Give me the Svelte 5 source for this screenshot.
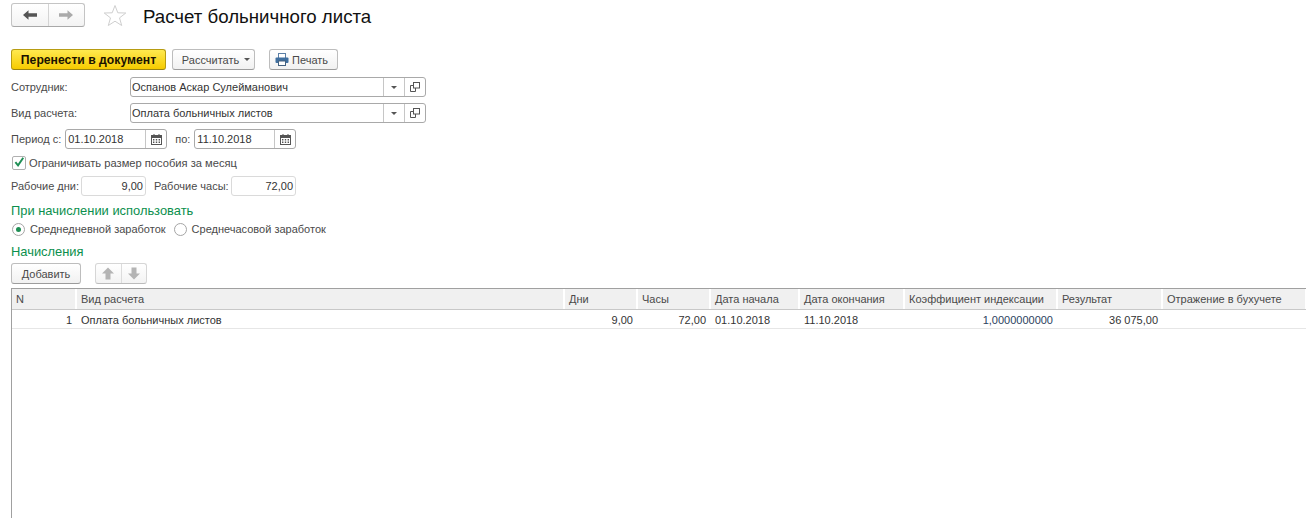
<script>
  const columns = [
    { title: "N", width: 65 },
    { title: "Вид расчета", width: 488 },
    { title: "Дни", width: 73 },
    { title: "Часы", width: 73 },
    { title: "Дата начала", width: 89 },
    { title: "Дата окончания", width: 105 },
    { title: "Коэффициент индексации", width: 153 },
    { title: "Результат", width: 105 },
    { title: "Отражение в бухучете", width: 144 }
  ];
  const row = [
    { text: "1", right: true },
    { text: "Оплата больничных листов" },
    { text: "9,00", right: true },
    { text: "72,00", right: true },
    { text: "01.10.2018" },
    { text: "11.10.2018" },
    { text: "1,0000000000", right: true, link: true },
    { text: "36 075,00", right: true },
    { text: "" }
  ];
  const gridColumns = columns.map((c) => c.width + "px").join(" ");
</script>

{#snippet calendar()}
  <svg width="11" height="11" viewBox="0 0 11 11">
    <rect x="0.5" y="1.5" width="10" height="9" fill="#fff" stroke="#555" />
    <rect x="0.5" y="1.5" width="10" height="2.5" fill="#555" />
    <path d="M2.5 0h1v2h-1zM7.5 0h1v2h-1z" fill="#555" />
    <path d="M2 5h1.4v1.4H2zM4.8 5h1.4v1.4H4.8zM7.6 5h1.4v1.4H7.6zM2 7.6h1.4V9H2zM4.8 7.6h1.4V9H4.8zM7.6 7.6h1.4V9H7.6z" fill="#555" />
  </svg>
{/snippet}

{#snippet refField(value)}
  <div class="field wide">
    <span class="value">{value}</span>
    <span class="cell-btn"><i class="caret"></i></span>
    <span class="cell-btn">
      <svg width="10" height="10" viewBox="0 0 10 10" fill="none" stroke="#555">
        <rect x="3.5" y="0.5" width="6" height="5.5" fill="#fff" />
        <path d="M3.5 3.5H0.5V9.5H5.5V6" />
      </svg>
    </span>
  </div>
{/snippet}

<div class="page">
  <div class="top">
    <div class="nav">
      <span class="nav-btn">
        <svg width="14" height="10" viewBox="0 0 14 10"><path d="M0 5L5.5 0.3V3.3H14V6.7H5.5V9.7Z" fill="#555" /></svg>
      </span>
      <span class="nav-btn">
        <svg width="14" height="10" viewBox="0 0 14 10"><path d="M14 5L8.5 0.3V3.3H0V6.7H8.5V9.7Z" fill="#aaa" /></svg>
      </span>
    </div>
    <svg class="star" width="24" height="23" viewBox="0 0 24 23">
      <path d="M12 1.5L14.8 8.8L22.8 9L16.5 13.9L18.7 21.5L12 17.2L5.3 21.5L7.5 13.9L1.2 9L9.2 8.8Z" fill="#fff" stroke="#cfcfcf" />
    </svg>
    <h1>Расчет больничного листа</h1>
  </div>

  <div class="actions">
    <button class="btn primary">Перенести в документ</button>
    <button class="btn calc">Рассчитать <i class="caret"></i></button>
    <button class="btn print">
      <svg width="14" height="13" viewBox="0 0 14 13">
        <rect x="3.5" y="0.5" width="7" height="5" fill="#fff" stroke="#5b7fa6" />
        <rect x="0.5" y="4.5" width="13" height="5.5" rx="1" fill="#3f6f9f" />
        <rect x="3.5" y="8" width="7" height="4.5" fill="#fff" stroke="#44617f" />
      </svg>
      Печать
    </button>
  </div>

  <div class="line ref">
    <span class="label ref-label">Сотрудник:</span>
    {@render refField("Оспанов Аскар Сулейманович")}
  </div>
  <div class="line ref">
    <span class="label ref-label">Вид расчета:</span>
    {@render refField("Оплата больничных листов")}
  </div>

  <div class="line period">
    <span class="label">Период с:</span>
    <div class="field date">
      <span class="value">01.10.2018</span>
      <span class="cell-btn">{@render calendar()}</span>
    </div>
    <span class="label till">по:</span>
    <div class="field date">
      <span class="value">11.10.2018</span>
      <span class="cell-btn">{@render calendar()}</span>
    </div>
  </div>

  <div class="check-line">
    <span class="check">
      <svg width="15" height="15" viewBox="0 0 15 15">
        <path d="M3 7L6.3 11L12.8 1.5" fill="none" stroke="#1f8f55" stroke-width="2.4" />
      </svg>
    </span>
    <span class="check-text">Ограничивать размер пособия за месяц</span>
  </div>

  <div class="line work">
    <span class="label days-label">Рабочие дни:</span>
    <div class="field num">9,00</div>
    <span class="label hours-label">Рабочие часы:</span>
    <div class="field num">72,00</div>
  </div>

  <div class="group-title use">При начислении использовать</div>
  <div class="radios">
    <span class="radio on"></span><span class="radio-text">Среднедневной заработок</span>
    <span class="radio"></span><span>Среднечасовой заработок</span>
  </div>

  <div class="group-title accruals">Начисления</div>
  <div class="table-bar">
    <button class="btn add">Добавить</button>
    <div class="arrows">
      <span class="arrow">
        <svg width="12" height="13" viewBox="0 0 12 13"><path d="M6 0.5L12 6.5H8.5V12.5H3.5V6.5H0Z" fill="#b4b4b4" /></svg>
      </span>
      <span class="arrow">
        <svg width="12" height="13" viewBox="0 0 12 13"><path d="M6 12.5L12 6.5H8.5V0.5H3.5V6.5H0Z" fill="#b4b4b4" /></svg>
      </span>
    </div>
  </div>

  <div class="table">
    <div class="thead" style="grid-template-columns:{gridColumns}">
      {#each columns as col}
        <div class="th">{col.title}</div>
      {/each}
    </div>
    <div class="tr" style="grid-template-columns:{gridColumns}">
      {#each row as cell}
        <div class="td" class:right={cell.right} class:link={cell.link}>{cell.text}</div>
      {/each}
    </div>
  </div>
</div>

<style>
  :global(body) {
    margin: 0;
    background: #fff;
    overflow: hidden;
  }
  .page {
    height: 518px;
    box-sizing: border-box;
    padding: 3px 0 0 11px;
    font: 11px "Liberation Sans", Arial, sans-serif;
    color: #4a4a4a;
    display: flex;
    flex-direction: column;
    overflow: hidden;
  }
  .top {
    display: flex;
    align-items: center;
    height: 24px;
  }
  .nav {
    display: flex;
    width: 74px;
    height: 24px;
    box-sizing: border-box;
    border: 1px solid #c4c4c4;
    border-bottom-color: #a8a8a8;
    border-radius: 3px;
    background: linear-gradient(#fff, #f3f3f3);
  }
  .nav-btn {
    flex: 1;
    display: flex;
    align-items: center;
    justify-content: center;
  }
  .nav-btn + .nav-btn {
    border-left: 1px solid #d4d4d4;
  }
  .star {
    margin-left: 18px;
  }
  h1 {
    margin: 3px 0 0 16px;
    font-size: 18.67px;
    font-weight: 400;
    color: #111;
  }
  .actions {
    display: flex;
    margin-top: 22px;
    height: 21px;
  }
  .btn {
    box-sizing: border-box;
    height: 21px;
    padding: 0;
    border: 1px solid #bdbdbd;
    border-bottom-color: #9c9c9c;
    border-radius: 3px;
    background: linear-gradient(#fff, #f1f1f1);
    font: inherit;
    color: #4a4a4a;
    display: flex;
    align-items: center;
    justify-content: center;
  }
  .primary {
    width: 155px;
    background: linear-gradient(#ffe94f, #f6cb00);
    border-color: #b79c12;
    border-bottom-color: #9a8410;
    color: #1a1200;
    font-size: 12.2px;
    font-weight: 700;
  }
  .calc {
    width: 83px;
    margin-left: 6px;
    padding-left: 5px;
    gap: 5px;
  }
  .print {
    width: 69px;
    margin-left: 14px;
    justify-content: flex-start;
    padding-left: 5px;
    gap: 3px;
  }
  .caret {
    display: inline-block;
    width: 0;
    height: 0;
    border: 3px solid transparent;
    border-top-color: #555;
    border-bottom-width: 0;
  }
  .line {
    display: flex;
    align-items: center;
    height: 20px;
  }
  .ref {
    margin-top: 6px;
  }
  .actions + .ref {
    margin-top: 7px;
  }
  .ref-label {
    width: 119px;
  }
  .field {
    box-sizing: border-box;
    height: 20px;
    border: 1px solid #a9a9a9;
    border-radius: 3px;
    background: #fff;
    display: flex;
    align-items: center;
    color: #333;
  }
  .wide {
    width: 296px;
  }
  .value {
    flex: 1;
    padding-left: 1px;
  }
  .cell-btn {
    flex: none;
    box-sizing: border-box;
    width: 21px;
    height: 18px;
    border-left: 1px solid #c6c6c6;
    display: flex;
    align-items: center;
    justify-content: center;
  }
  .period {
    margin-top: 6px;
  }
  .date {
    width: 102px;
    margin-left: 4px;
  }
  .date .value {
    padding-left: 2px;
  }
  .till {
    margin-left: 8px;
  }
  .date + .till + .date {
    margin-left: 4px;
  }
  .check-line {
    display: flex;
    align-items: center;
    height: 15px;
    margin-top: 6px;
    margin-left: 1px;
    gap: 3px;
  }
  .check-text {
    font-size: 11.15px;
  }
  .check {
    box-sizing: border-box;
    width: 14px;
    height: 14px;
    border: 1px solid #b0b0b0;
    border-radius: 2px;
    background: #fff;
    display: flex;
    align-items: center;
    justify-content: center;
  }
  .work {
    margin-top: 6px;
  }
  .days-label {
    width: 70px;
  }
  .hours-label {
    width: 77px;
    margin-left: 8px;
  }
  .num {
    width: 65px;
    justify-content: flex-end;
    padding-right: 2px;
    border-color: #dadada;
  }
  .group-title {
    font-size: 12.9px;
    line-height: 15px;
    color: #0b8f4d;
  }
  .use {
    margin-top: 7px;
  }
  .radios {
    display: flex;
    align-items: center;
    height: 14px;
    margin-top: 4px;
    margin-left: 1px;
  }
  .radio {
    box-sizing: border-box;
    width: 13px;
    height: 13px;
    margin-right: 5px;
    border: 1px solid #a5a5a5;
    border-radius: 50%;
    background: #fff;
    display: flex;
    align-items: center;
    justify-content: center;
  }
  .on::after {
    content: "";
    width: 5px;
    height: 5px;
    border-radius: 50%;
    background: #1f8f55;
  }
  .radio-text {
    margin-right: 8px;
  }
  .accruals {
    margin-top: 8px;
  }
  .table-bar {
    display: flex;
    margin-top: 4px;
    height: 21px;
  }
  .add {
    width: 70px;
  }
  .arrows {
    display: flex;
    width: 52px;
    height: 21px;
    box-sizing: border-box;
    margin-left: 14px;
    border: 1px solid #d6d6d6;
    border-bottom-color: #bcbcbc;
    border-radius: 3px;
    background: linear-gradient(#fff, #f3f3f3);
  }
  .arrow {
    flex: 1;
    display: flex;
    align-items: center;
    justify-content: center;
  }
  .arrow + .arrow {
    border-left: 1px solid #dcdcdc;
  }
  .table {
    flex: 1;
    margin-top: 4px;
    border-top: 1px solid #a0a0a0;
    border-left: 1px solid #a0a0a0;
    color: #333;
  }
  .thead,
  .tr {
    display: grid;
  }
  .thead {
    height: 21px;
    box-sizing: border-box;
    background: #f0f0f0;
    border-bottom: 1px solid #c8c8c8;
  }
  .th {
    border-right: 2px solid #fff;
    padding-left: 4px;
    line-height: 20px;
    white-space: nowrap;
    color: #4a4a4a;
  }
  .tr {
    height: 19px;
    box-sizing: border-box;
    border-bottom: 1px solid #e6e6e6;
  }
  .td {
    padding: 1px 4px 0 4px;
    line-height: 19px;
    white-space: nowrap;
  }
  .right {
    text-align: right;
    padding-right: 5px;
  }
  .link {
    color: #2b4260;
  }
</style>
